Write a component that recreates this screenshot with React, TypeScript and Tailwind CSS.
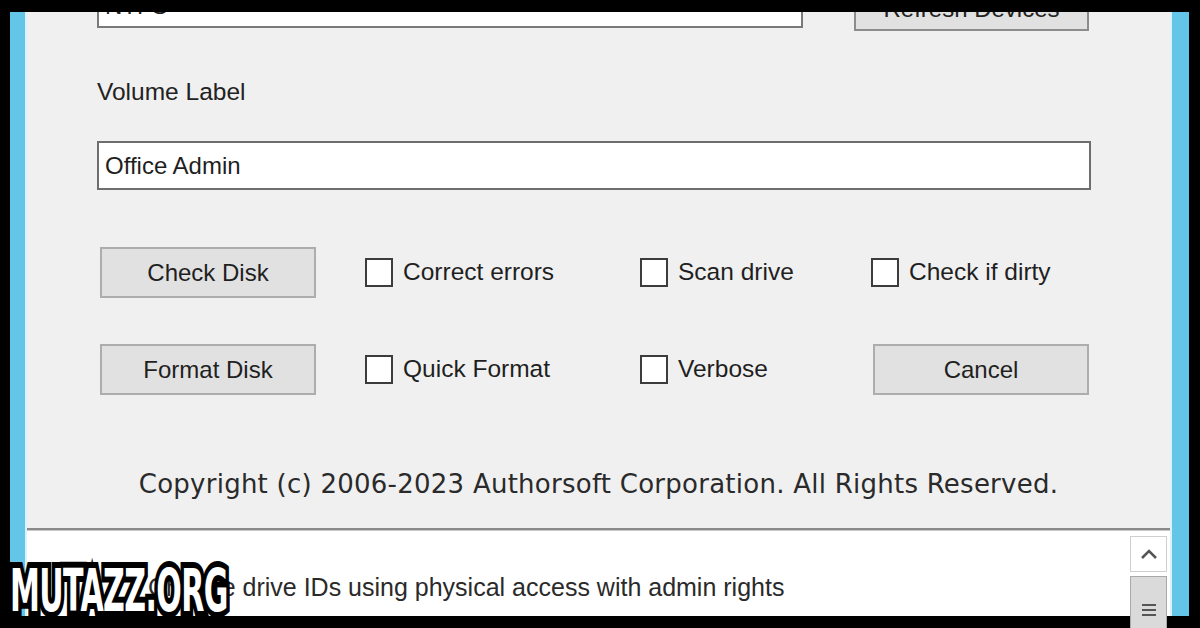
import React from 'react';

const ui = "font-['Liberation_Sans',Arial,sans-serif]";

const Btn = ({ label, className = '' }: { label: string; className?: string }) => (
  <div
    className={`flex h-[51px] w-[216px] items-center justify-center border-2 border-[#adadad] bg-[#e1e1e1] text-[24px] text-[#1f1f1f] ${className}`}
  >
    {label}
  </div>
);

const Check = ({ label }: { label: string }) => (
  <div className="flex items-center gap-[10px]">
    <div className="h-[29px] w-[28px] border-2 border-[#3c3c3c] bg-white" />
    <span className="text-[24.5px] text-[#1f1f1f]">{label}</span>
  </div>
);

export default function App() {
  return (
    <div className={`relative h-[628px] w-[1200px] overflow-hidden bg-black pl-[10px] pr-[11px] pt-[12px] ${ui}`}>
      <div className="flex h-[604px]">
        <div className="w-[15px] bg-[#63c6e8]" />
        <div className="w-[2px] bg-[#dcf1f8]" />
        <div className="flex flex-1 flex-col">
          {/* main dialog panel */}
          <div className="flex h-[516px] flex-col overflow-hidden bg-[#f0f0f0] pl-[70px]">
            <div className="flex h-[19px] items-start">
              <div className="relative -mt-[20px] flex h-[36px] w-[706px] items-end border-2 border-[#7a7a7a] bg-white px-[6px] pb-[8px] text-[24px] leading-[24px] text-[#222]">
                NTFS
                <span className="absolute right-[16px] bottom-[12px] text-[16px] text-[#444]">&#8964;</span>
              </div>
              <div className="-mt-[21px] ml-[51px] flex h-[40px] w-[235px] items-end justify-center border-2 border-[#8c8c8c] bg-[#e1e1e1] pb-[8px] text-[24px] leading-[24px] text-[#222]">
                Refresh Devices
              </div>
            </div>

            <div className="mt-[47px] text-[24.5px] leading-[28px] text-[#222]">Volume Label</div>

            <div className="mt-[35px] flex h-[49px] w-[994px] items-center border-2 border-[#6e6e6e] bg-white px-[6px] text-[24px] text-[#1f1f1f]">
              Office Admin
            </div>

            <div className="mt-[57px] grid grid-cols-[265px_275px_231px_auto] items-center pl-[3px]">
              <Btn label="Check Disk" />
              <Check label="Correct errors" />
              <Check label="Scan drive" />
              <Check label="Check if dirty" />
            </div>

            <div className="mt-[46px] grid grid-cols-[265px_275px_231px_auto] items-center pl-[3px]">
              <Btn label="Format Disk" />
              <Check label="Quick Format" />
              <Check label="Verbose" />
              <Btn label="Cancel" className="ml-[2px]" />
            </div>

            <div className="-ml-[70px] mt-[74px] text-center font-['DejaVu_Sans',Verdana,sans-serif] text-[26px] leading-[30px] tracking-[0.25px] text-[#2a2a2a]">
              Copyright (c) 2006-2023 Authorsoft Corporation. All Rights Reserved.
            </div>
          </div>

          <div className="h-[3px] border-t-2 border-[#8a8a8a] bg-[#c8c8c8]" />

          {/* log area */}
          <div className="relative flex-1 bg-white">
            <div className="pl-[121px] pt-[41px] text-[25px] leading-[30px] text-[#2a2a2a]">
              Change drive IDs using physical access with admin rights
            </div>
            <div className="absolute right-[3px] top-[5px] flex w-[37px] flex-col gap-[4px]">
              <div className="flex h-[36px] items-center justify-center border border-[#cfcfcf] bg-white">
                <svg width="18" height="12" viewBox="0 0 18 12">
                  <path d="M2 10 L9 3 L16 10" fill="none" stroke="#555" strokeWidth="2.5" />
                </svg>
              </div>
              <div className="flex h-[60px] flex-col items-center gap-[3px] border border-[#a9a9a9] bg-[#dadada] pt-[27px]">
                <div className="h-[2px] w-[14px] bg-[#555]" />
                <div className="h-[2px] w-[14px] bg-[#555]" />
                <div className="h-[2px] w-[14px] bg-[#555]" />
              </div>
            </div>
          </div>
        </div>
        <div className="w-[2px] bg-[#dcf1f8]" />
        <div className="w-[17px] bg-[#63c6e8]" />
      </div>

      {/* watermark */}
      <div className="absolute left-[10px] top-[562px] origin-left scale-x-[0.575] font-['DejaVu_Sans_Condensed','DejaVu_Sans',sans-serif] text-[58px] font-bold leading-[58px] tracking-[-1px] text-white [-webkit-text-stroke:12px_black] [paint-order:stroke_fill]">
        MUTAZZ.ORG
      </div>
    </div>
  );
}
